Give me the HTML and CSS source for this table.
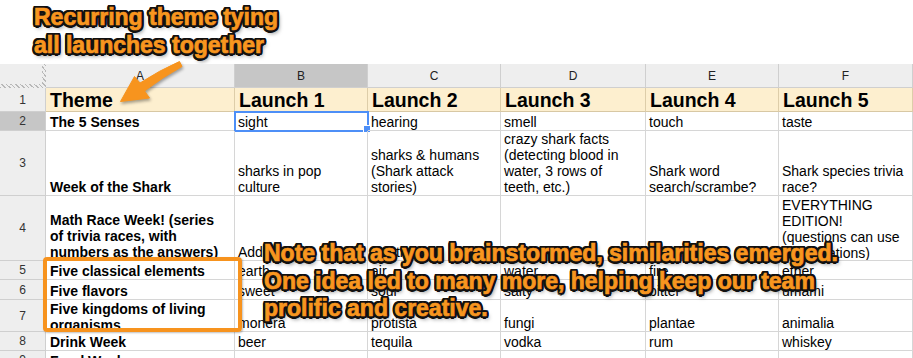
FILE: index.html
```html
<!DOCTYPE html>
<html>
<head>
<meta charset="utf-8">
<link rel="stylesheet" href="styles.css">
</head>
<body>
<div class="page">
  <div class="top-note">
    <div class="callout">Recurring theme tying<br>all launches together</div>
  </div>
  <div class="sheet">
    <div class="corner"></div>
    <div class="ch">A</div><div class="ch sel">B</div><div class="ch">C</div><div class="ch">D</div><div class="ch">E</div><div class="ch last">F</div>

    <div class="rh">1</div>
    <div class="c hd">Theme</div><div class="c hd">Launch 1</div><div class="c hd">Launch 2</div><div class="c hd">Launch 3</div><div class="c hd">Launch 4</div><div class="c hd">Launch 5</div>

    <div class="rh sel">2</div>
    <div class="c b">The 5 Senses</div><div class="c active">sight</div><div class="c">hearing</div><div class="c">smell</div><div class="c">touch</div><div class="c">taste</div>

    <div class="rh">3</div>
    <div class="c b">Week of the Shark</div><div class="c">sharks in pop culture</div><div class="c">sharks &amp; humans (Shark attack stories)</div><div class="c">crazy shark facts (detecting blood in water, 3 rows of teeth, etc.)</div><div class="c">Shark word search/scrambe?</div><div class="c">Shark species trivia race?</div>

    <div class="rh">4</div>
    <div class="c b">Math Race Week! (series of trivia races, with numbers as the answers)</div><div class="c">Addition</div><div class="c">Subtraction</div><div class="c">Multiplication</div><div class="c">Division</div><div class="c top">EVERYTHING EDITION! (questions can use all operations)</div>

    <div class="rh">5</div>
    <div class="c b">Five classical elements</div><div class="c">earth</div><div class="c">air</div><div class="c">water</div><div class="c">fire</div><div class="c">ether</div>

    <div class="rh">6</div>
    <div class="c b">Five flavors</div><div class="c">sweet</div><div class="c">sour</div><div class="c">salty</div><div class="c">bitter</div><div class="c">umami</div>

    <div class="rh">7</div>
    <div class="c b top">Five kingdoms of living organisms</div><div class="c">monera</div><div class="c">protista</div><div class="c">fungi</div><div class="c">plantae</div><div class="c">animalia</div>

    <div class="rh">8</div>
    <div class="c b">Drink Week</div><div class="c">beer</div><div class="c">tequila</div><div class="c">vodka</div><div class="c">rum</div><div class="c">whiskey</div>

    <div class="rh">9</div>
    <div class="c b">Food Week</div><div class="c"></div><div class="c"></div><div class="c"></div><div class="c"></div><div class="c"></div>
  </div>

  <svg class="arrow" width="75" height="55" viewBox="112 56 75 55">
    <path d="M179.5,61.5 Q160,70 140,83 L134.5,76.5 L120.5,101.5 L149.5,98 L144.5,91 Q163,77 182,66.5 Z" fill="#f7941e" stroke="#f7941e" stroke-width="1" stroke-linejoin="round"/>
  </svg>
  <div class="box"></div>
  <div class="callout note">Note that as you brainstormed, similarities emerged.<br>One idea led to many more, helping keep our team<br>prolific and creative.</div>
</div>
</body>
</html>
```

FILE: styles.css
```css
* { box-sizing: border-box; }
html, body { margin: 0; padding: 0; background: #fff; }
body { font-family: "Liberation Sans", Arial, sans-serif; width: 913px; height: 358px; overflow: hidden; }

.page { position: relative; width: 913px; height: 358px; overflow: hidden; }

.top-note { height: 64px; padding: 3px 0 0 34px; }

.callout {
  font-family: "Liberation Sans", Arial, sans-serif;
  font-weight: bold;
  font-size: 23px;
  line-height: 28px;
  color: #f8961f;
  -webkit-text-stroke: 0.7px #f8961f;
  text-shadow:
    -2px -2px 0 #111, 2px -2px 0 #111, -2px 2px 0 #111, 2px 2px 0 #111,
    0 -2.5px 0 #111, 0 2.5px 0 #111, -2.5px 0 0 #111, 2.5px 0 0 #111,
    -1px -2.3px 0 #111, 1px -2.3px 0 #111, -1px 2.3px 0 #111, 1px 2.3px 0 #111,
    -2.3px -1px 0 #111, 2.3px -1px 0 #111, -2.3px 1px 0 #111, 2.3px 1px 0 #111,
    2px 3px 4px rgba(0,0,0,0.6);
  white-space: nowrap;
}

.sheet {
  display: grid;
  grid-template-columns: 46px 189px 133px 133px 145px 133px 134px;
  grid-template-rows: 24px 24px 19px 65px 65px 19px 20px 32px 19px 19px;
  font-size: 14px;
  color: #000;
}

.corner {
  background: #eeeeee;
  border-right: 4px solid #ccc;
  border-bottom: 4px solid #ccc;
  border-image: repeating-linear-gradient(45deg, #b8b8b8 0 1px, #eeeeee 1px 3px) 4;
}

.ch {
  background: #eeeeee;
  border-right: 1px solid #cfcfcf;
  border-bottom: 1px solid #cfcfcf;
  display: flex;
  align-items: center;
  justify-content: center;
  font-size: 12px;
  color: #222;
}
.ch.sel { background: #c6c6c6; }

.rh {
  background: #eeeeee;
  border-right: 1px solid #cfcfcf;
  border-bottom: 1px solid #cfcfcf;
  display: flex;
  align-items: center;
  justify-content: center;
  font-size: 12px;
  color: #333;
}
.rh.sel { background: #c6c6c6; }

.c {
  border-right: 1px solid #d6d6d6;
  border-bottom: 1px solid #d6d6d6;
  padding: 0 5px 0 3px;
  line-height: 16px;
  overflow: hidden;
  display: flex;
  flex-direction: column;
  justify-content: flex-end;
  position: relative;
}
.c.top { justify-content: flex-start; padding-top: 1px; }
.c.b { font-weight: bold; padding-left: 4px; }

.c.hd {
  background: #fdefcf;
  border-right-color: #ddcda9;
  border-bottom-color: #d8c8a4;
  font-weight: bold;
  font-size: 19.5px;
  line-height: 22px;
  padding-left: 4px;
  overflow: visible;
}

.c.active {
  overflow: visible;
  outline: 2px solid #4d8ff7;
  outline-offset: -1px;
}
.c.active::after {
  content: "";
  position: absolute;
  right: -4px;
  bottom: -3px;
  width: 6px;
  height: 6px;
  background: #4d8ff7;
  border: 1px solid #fff;
}

.arrow {
  position: absolute;
  left: 112px;
  top: 56px;
  filter: drop-shadow(1px 2px 1.5px rgba(0,0,0,0.35));
}

.box {
  position: absolute;
  left: 43px;
  top: 257px;
  width: 199px;
  height: 75px;
  border: 4px solid #f7931e;
  border-radius: 4px;
  box-shadow: 1px 1px 2px rgba(0,0,0,0.25);
}

.note {
  position: absolute;
  left: 264px;
  top: 240px;
  line-height: 27.5px;
}
```
